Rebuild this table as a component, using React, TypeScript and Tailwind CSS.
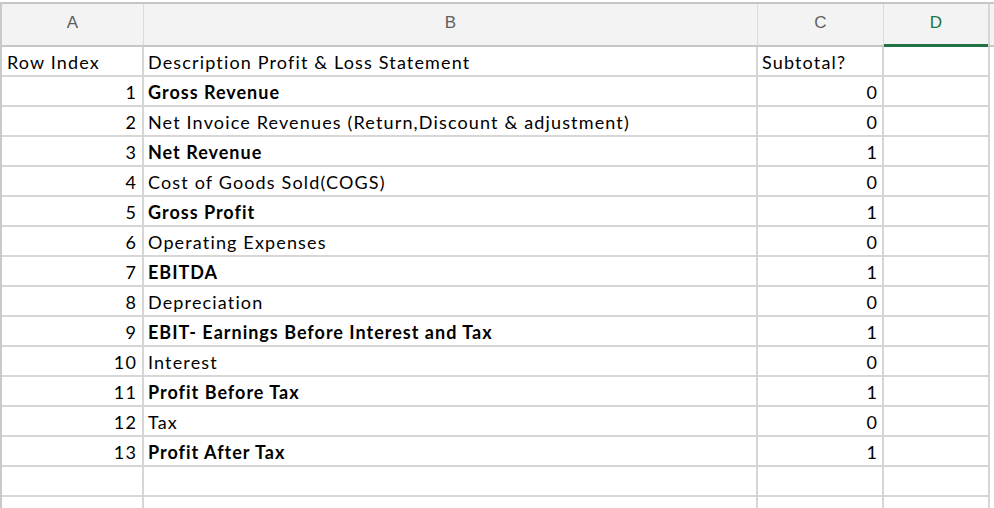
import React from "react";

type Row = { idx: number; label: string; sub: number; bold?: boolean };

const rows: Row[] = [
  { idx: 1, label: "Gross Revenue", sub: 0, bold: true },
  { idx: 2, label: "Net Invoice Revenues (Return,Discount & adjustment)", sub: 0 },
  { idx: 3, label: "Net Revenue", sub: 1, bold: true },
  { idx: 4, label: "Cost of Goods Sold(COGS)", sub: 0 },
  { idx: 5, label: "Gross Profit", sub: 1, bold: true },
  { idx: 6, label: "Operating Expenses", sub: 0 },
  { idx: 7, label: "EBITDA", sub: 1, bold: true },
  { idx: 8, label: "Depreciation", sub: 0 },
  { idx: 9, label: "EBIT- Earnings Before Interest and Tax", sub: 1, bold: true },
  { idx: 10, label: "Interest", sub: 0 },
  { idx: 11, label: "Profit Before Tax", sub: 1, bold: true },
  { idx: 12, label: "Tax", sub: 0 },
  { idx: 13, label: "Profit After Tax", sub: 1, bold: true },
];

const cell = "h-[30px] pt-[3px] border-r-2 border-b-2 border-[#d6d6d6] flex items-center whitespace-nowrap";
const cols = "grid grid-cols-[142px_614px_126px_106px]";

export default function App() {
  return (
    <div
      className="w-[994px] h-[508px] overflow-hidden bg-white pt-[2px] text-[18px] tracking-[1.15px] text-black"
      style={{ fontFamily: "Lato, 'Noto Sans', sans-serif" }}
    >
      <div className="border-l-2 border-[#c9c9c9]">
        {/* column headers */}
        <div
          className={`${cols} h-[45px] border-t-2 border-b-2 border-[#c6c6c6] bg-[#f3f3f3] text-[17px] tracking-normal text-[#5f5f5f]`}
          style={{ fontFamily: "'Liberation Sans', Arial, sans-serif" }}
        >
          <div className="flex items-center justify-center pb-[3px] border-r border-[#dadada]">A</div>
          <div className="flex items-center justify-center pb-[3px] border-r border-[#dadada]">B</div>
          <div className="flex items-center justify-center pb-[3px] border-r border-[#dadada]">C</div>
          <div className="relative flex items-center justify-center pb-[3px] border-r-2 border-[#d6d6d6] text-[#217346]">
            D
            <div className="absolute left-0 right-0 -bottom-[2px] h-[3px] bg-[#217346]" />
          </div>
        </div>

        <div className={cols}>
          <div className={`${cell} pl-[5px]`}>Row Index</div>
          <div className={`${cell} pl-[4px]`}>Description Profit &amp; Loss Statement</div>
          <div className={`${cell} pl-[4px]`}>Subtotal?</div>
          <div className={cell} />
        </div>

        {rows.map((r) => (
          <div key={r.idx} className={cols}>
            <div className={`${cell} justify-end pr-[5px]`}>{r.idx}</div>
            <div className={`${cell} pl-[4px] ${r.bold ? "font-bold tracking-[1px]" : ""}`}>{r.label}</div>
            <div className={`${cell} justify-end pr-[4px]`}>{r.sub}</div>
            <div className={cell} />
          </div>
        ))}

        {[0, 1].map((i) => (
          <div key={i} className={cols}>
            <div className={cell} />
            <div className={cell} />
            <div className={cell} />
            <div className={cell} />
          </div>
        ))}
      </div>
    </div>
  );
}
